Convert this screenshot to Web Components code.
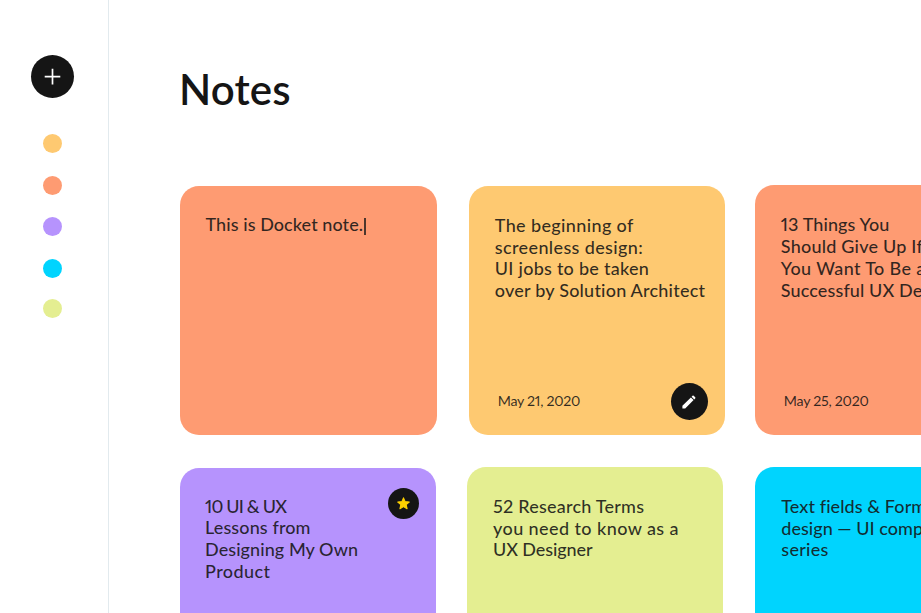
<!DOCTYPE html>
<html lang="en">
<head>
<meta charset="utf-8">
<title>Notes</title>
<style>
html,body{margin:0;height:100%;overflow:hidden;background:#fff}
body{font-family:Lato,"Liberation Sans",sans-serif;font-variant-numeric:proportional-nums;color:#151515}
</style>
</head>
<body>
<notes-app></notes-app>
<script>
const define = (name, html, setup) => customElements.define(name, class extends HTMLElement {
  constructor() {
    super();
    const t = document.createElement('template');
    t.innerHTML = html;
    this.attachShadow({mode: 'open'}).append(t.content.cloneNode(true));
  }
  connectedCallback() { if (setup) setup(this, this.shadowRoot); }
});

// One line of text, tracked so that it spans the given measure.
define('text-line', `<style>
  :host{display:block;white-space:pre;width:max-content}
  </style><span><slot></slot></span>`, (el, root) => {
  const span = root.querySelector('span');
  const w = parseFloat(el.getAttribute('measure'));
  if (w) {
    const natural = span.getBoundingClientRect().width;
    span.style.letterSpacing = ((w - natural) / (el.textContent.length - 1)) + 'px';
  }
});

define('color-dot', `<style>
  :host{display:block;width:19px;height:19px;border-radius:50%;background:var(--c)}
  </style>`);

define('round-button', `<style>
  :host{display:grid;place-items:center;border-radius:50%;background:#151515;width:var(--size);height:var(--size)}
  ::slotted(svg){display:block}
  </style><slot></slot>`);

define('side-bar', `<style>
  :host{display:flex;flex-direction:column;align-items:center;box-sizing:border-box;width:109px;height:613px;
    padding:54.5px 4px 0 0;border-right:1px solid #e2eaee;flex:none}
  round-button{--size:43px;margin-bottom:36.5px}
  .dots{display:flex;flex-direction:column;gap:22.5px}
  .dots color-dot:last-child{margin-top:-1.2px}
  </style>
  <round-button><svg width="17" height="17" viewBox="0 0 17 17"><path d="M8.5 .8v15.6M.7 8.6h15.6" stroke="#fff" stroke-width="1.7" fill="none"/></svg></round-button>
  <div class="dots">
    <color-dot style="--c:#fec971"></color-dot>
    <color-dot style="--c:#fe9b72"></color-dot>
    <color-dot style="--c:#b693fd"></color-dot>
    <color-dot style="--c:#00d4fe"></color-dot>
    <color-dot style="--c:#e4ee91"></color-dot>
  </div>`);

define('note-card', `<style>
  :host{display:flex;flex-direction:column;justify-content:space-between;box-sizing:border-box;flex:none;position:relative;
    width:256px;height:249.5px;border-radius:19px;background:var(--c);padding:29.3px 17px 15px 26px;
    font-size:18px;font-weight:500;line-height:21.8px;color:rgba(21,21,21,.88)}
  .foot{display:flex;justify-content:space-between;align-items:center;padding-left:3px;font-size:14.2px;font-weight:400;min-height:37px}
  ::slotted([slot=badge]){position:absolute;right:17px;top:20.5px}
  </style>
  <div><slot></slot></div>
  <div class="foot"><slot name="date"></slot><slot name="action"></slot></div>
  <slot name="badge"></slot>`);

define('notes-app', `<style>
  :host{display:flex;width:921px;height:613px;overflow:hidden}
  main{flex:1;min-width:0;padding:59px 0 0 70.5px}
  h1{margin:0 0 0 -.5px;font-size:42px;line-height:60px;font-weight:600;height:126.5px;color:#151515}
  .row{display:flex;align-items:flex-start;width:max-content}
  .row+.row{margin-top:31.5px}
  .orange{--c:#fe9b72}.yellow{--c:#fec971}.purple{--c:#b693fd}.lime{--c:#e4ee91}.cyan{--c:#00d4fe}
  .typing{display:flex;align-items:center;margin-top:-1px}
  .caret{width:2px;height:17px;background:#4d362c;margin:3px 0 0 1px}
  .late{--c:#fe9b72}
  [slot=date]{margin-top:-.4px}
  </style>
  <side-bar></side-bar>
  <main>
    <h1><text-line measure="111.5">Notes</text-line></h1>
    <div class="row">
      <note-card class="orange" style="width:257px"><div class="typing"><text-line measure="157.5">This is Docket note.</text-line><span class="caret"></span></div></note-card>
      <note-card class="yellow" style="margin-left:32.3px">
        <text-line measure="138.5">The beginning of</text-line>
        <text-line measure="148">screenless design:</text-line>
        <text-line measure="154">UI jobs to be taken</text-line>
        <text-line measure="210.5">over by Solution Architect</text-line>
        <text-line slot="date" measure="82.5">May 21, 2020</text-line>
        <round-button slot="action" style="--size:37px"><svg width="16" height="16" viewBox="0 0 16 16" fill="#fff"><path d="M1.4 11.8 9.9 3.4l2.7 2.7-8.4 8.5H1.4zM10.6 2.7l.9-.9q.6-.5 1.2 0l1.5 1.5q.5.6 0 1.2l-.9.9z"/></svg></round-button>
      </note-card>
      <note-card class="orange" style="margin:-.5px 0 0 30px">
        <text-line measure="108.5">13 Things You</text-line>
        <text-line measure="142">Should Give Up If</text-line>
        <text-line measure="144.5">You Want To Be a</text-line>
        <text-line measure="190">Successful UX Designer</text-line>
        <text-line slot="date" measure="85">May 25, 2020</text-line>
      </note-card>
    </div>
    <div class="row">
      <note-card class="purple" style="margin:1px 0 0 .5px;padding-left:25px;padding-top:28px">
        <text-line measure="82">10 UI &amp; UX</text-line>
        <text-line measure="105.5">Lessons from</text-line>
        <text-line measure="153">Designing My Own</text-line>
        <text-line measure="65">Product</text-line>
        <round-button slot="badge" style="--size:31px"><svg width="15" height="15" viewBox="0 0 24 24"><path d="M12 3l2.6 6 6.6.6-5 4.3 1.5 6.5-5.7-3.4-5.7 3.4 1.5-6.5-5-4.3 6.6-.6z" fill="#fdd000" stroke="#fdd000" stroke-width="1.8" stroke-linejoin="round"/></svg></round-button>
      </note-card>
      <note-card class="lime" style="margin-left:31px">
        <text-line measure="151">52 Research Terms</text-line>
        <text-line measure="185.5">you need to know as a</text-line>
        <text-line measure="99.5">UX Designer</text-line>
      </note-card>
      <note-card class="cyan" style="margin-left:32.3px">
        <text-line measure="152.5">Text fields &amp; Forms</text-line>
        <text-line measure="196">design — UI components</text-line>
        <text-line measure="47">series</text-line>
      </note-card>
    </div>
  </main>`);
</script>
</body>
</html>
